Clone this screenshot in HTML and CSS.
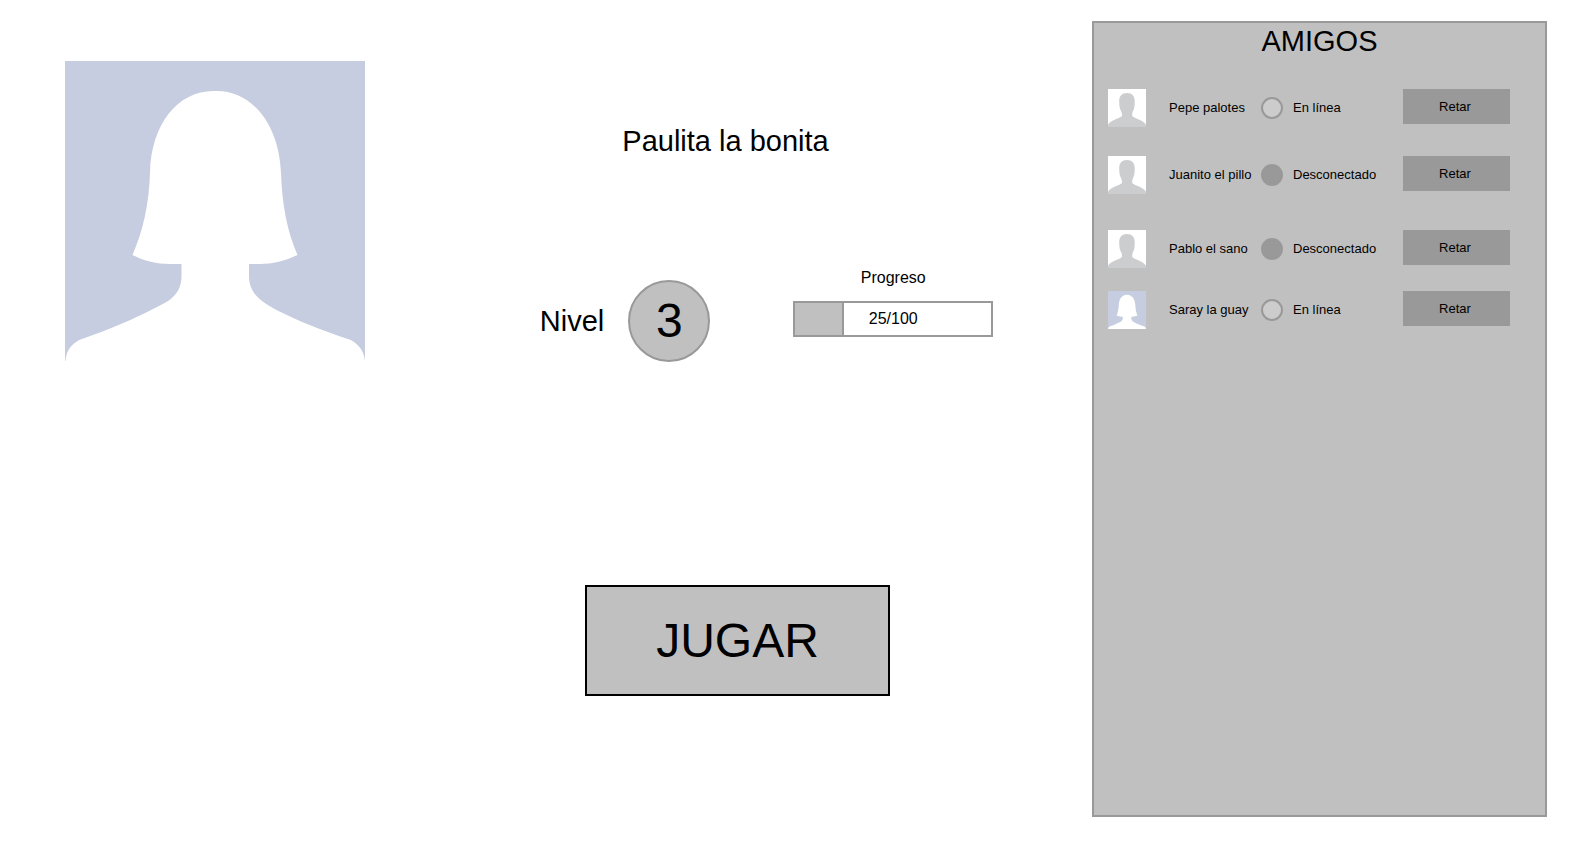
FILE: index.html
```html
<!DOCTYPE html>
<html lang="es">
<head>
<meta charset="utf-8">
<meta name="viewport" content="width=device-width, initial-scale=1">
<title>Perfil</title>
<link rel="stylesheet" href="styles.css">
</head>
<body>
<svg class="defs" aria-hidden="true">
  <symbol id="woman" viewBox="0 0 300 300">
    <path fill="#c7cde0" d="M0 0H300V300H0Z"/>
    <path fill="#fff" d="M150 30C186 29 214 62 216 112C217 143 222 170 232.500 194C220 200 207 203 195 203H184V215C184 226 189 234 197 240C215 253 250 267 283 278C292 281 299 289 300 300H0.500C1 289 8 281 17 278C50 267 86 250 103 240C112 234 116.500 226 116.500 215V203H105C92 203 79 200 67.500 194C78 170 84 143 85 112C86 62 114 29 150 30Z"/>
  </symbol>
  <symbol id="man" viewBox="0 0 38 38">
    <path fill="#fff" d="M0 0H38V38H0Z"/>
    <path fill="#cccdcf" d="M19 4C24 4 26.700 7 26.700 12C26.700 16 26.500 19 25.500 21C24.500 22.500 24.200 24 24.200 27C27 30 36 31 38 36V38H0V36C2 31 11 30 14 27C14 24 13.500 22.500 12.500 21C11.500 19 11.200 16 11.200 12C11.200 7 14 4 19 4Z"/>
  </symbol>
</svg>
<div class="page">
  <svg class="portrait" viewBox="0 0 300 300" role="img" aria-label="Paulita la bonita"><use href="#woman"/></svg>
  <main class="profile">
    <h1 class="heading">Paulita la bonita</h1>
    <div class="stats">
      <div class="level">
        <span class="heading">Nivel</span>
        <span class="level-badge">3</span>
      </div>
      <div class="progress">
        <span id="progress-label">Progreso</span>
        <div class="bar" role="progressbar" aria-labelledby="progress-label" aria-valuenow="25" aria-valuemin="0" aria-valuemax="100">
          <div class="bar-fill" style="width: 25%"></div>
          <span class="bar-text">25/100</span>
        </div>
      </div>
    </div>
    <button class="play" type="button">JUGAR</button>
  </main>
  <aside class="friends">
    <h2 class="heading">AMIGOS</h2>
    <ul class="friend-list">
      <li class="friend">
        <svg class="avatar" aria-hidden="true"><use href="#man"/></svg>
        <span>Pepe palotes</span><i class="dot online"></i><span>En línea</span>
        <button class="challenge" type="button">Retar</button>
      </li>
      <li class="friend">
        <svg class="avatar" aria-hidden="true"><use href="#man"/></svg>
        <span>Juanito el pillo</span><i class="dot"></i><span>Desconectado</span>
        <button class="challenge" type="button">Retar</button>
      </li>
      <li class="friend">
        <svg class="avatar" aria-hidden="true"><use href="#man"/></svg>
        <span>Pablo el sano</span><i class="dot"></i><span>Desconectado</span>
        <button class="challenge" type="button">Retar</button>
      </li>
      <li class="friend">
        <svg class="avatar" aria-hidden="true"><use href="#woman"/></svg>
        <span>Saray la guay</span><i class="dot online"></i><span>En línea</span>
        <button class="challenge" type="button">Retar</button>
      </li>
    </ul>
  </aside>
</div>
</body>
</html>
```
FILE: styles.css
```css
* {
  box-sizing: border-box;
}

body {
  margin: 0;
  background: #fff;
  color: #000;
  font-family: "Liberation Sans", Arial, sans-serif;
  font-size: 16px;
  line-height: 18px;
}

button {
  padding: 0;
  color: inherit;
  font: inherit;
  cursor: pointer;
}

.defs {
  display: none;
}

.page {
  display: grid;
  grid-template-columns: 300fr 727fr 455fr;
  min-height: 100vh;
  padding: 21px 35px 38px 65px;
}

.portrait {
  width: 100%;
  margin-top: 40px;
}

.heading {
  margin: 0;
  font-size: 29px;
  font-weight: 400;
  line-height: 36px;
}

.profile {
  display: flex;
  flex-direction: column;
  align-items: center;
  padding: 102px 6px 0 0;
}

.stats {
  display: flex;
  align-items: flex-start;
  gap: 83px;
  margin: 110px 0 223px 82px;
}

.level {
  display: flex;
  align-items: center;
  gap: 24px;
  padding-top: 11px;
}

.level-badge {
  display: grid;
  place-items: center;
  width: 82px;
  height: 82px;
  border: 2px solid #999;
  border-radius: 50%;
  background: #c0c0c0;
  font-size: 48px;
  line-height: 56px;
}

.progress {
  display: flex;
  flex-direction: column;
  align-items: center;
  gap: 14px;
}

.bar {
  display: grid;
  align-items: center;
  width: 200px;
  height: 36px;
  border: 2px solid #999;
}

.bar-fill,
.bar-text {
  grid-area: 1 / 1;
}

.bar-fill {
  height: 100%;
  border-right: 2px solid #999;
  background: #c0c0c0;
}

.bar-text {
  text-align: center;
}

.play {
  width: 305px;
  height: 111px;
  margin-left: 24px;
  border: 2px solid #000;
  background: #c0c0c0;
  font-size: 48px;
  line-height: 56px;
}

.friends {
  border: 2px solid #999;
  background: #c0c0c0;
  text-align: center;
}

.friend-list {
  display: grid;
  grid-template-rows: 67px 74px 61px 38px;
  margin: 30px 0 0;
  padding: 0 35px 0 14px;
  list-style: none;
  text-align: left;
}

.friend {
  display: grid;
  grid-template-columns: 61px 92px 32px 1fr 107px;
  align-items: center;
  height: 38px;
  font-size: 13px;
  line-height: 16px;
}

.avatar {
  width: 38px;
  height: 38px;
}

.dot {
  width: 22px;
  height: 22px;
  border: 2px solid #999;
  border-radius: 50%;
  background: #999;
}

.online {
  background: #ccc;
}

.challenge {
  align-self: start;
  height: 35px;
  padding-right: 3px;
  border: 0;
  background: #999;
  line-height: 15px;
}
```
